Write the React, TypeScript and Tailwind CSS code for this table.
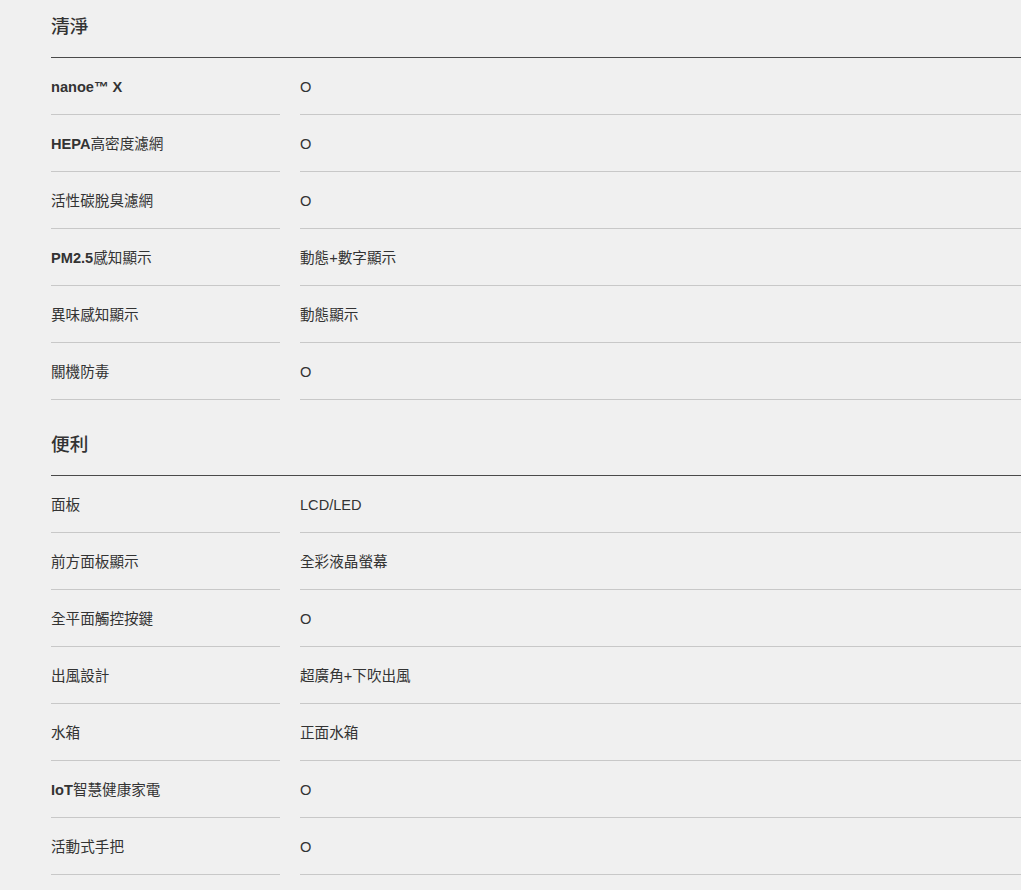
import React from 'react';

type Row = { label: React.ReactNode; value: string };

const sections: { title: string; rows: Row[] }[] = [
  {
    title: '清淨',
    rows: [
      { label: <b className="font-bold">nanoe™ X</b>, value: 'O' },
      { label: <><b className="font-bold">HEPA</b>高密度濾網</>, value: 'O' },
      { label: '活性碳脫臭濾網', value: 'O' },
      { label: <><b className="font-bold">PM2.5</b>感知顯示</>, value: '動態+數字顯示' },
      { label: '異味感知顯示', value: '動態顯示' },
      { label: '關機防毒', value: 'O' },
    ],
  },
  {
    title: '便利',
    rows: [
      { label: '面板', value: 'LCD/LED' },
      { label: '前方面板顯示', value: '全彩液晶螢幕' },
      { label: '全平面觸控按鍵', value: 'O' },
      { label: '出風設計', value: '超廣角+下吹出風' },
      { label: '水箱', value: '正面水箱' },
      { label: <><b className="font-bold">IoT</b>智慧健康家電</>, value: 'O' },
      { label: '活動式手把', value: 'O' },
    ],
  },
];

export default function App() {
  return (
    <div
      className="min-h-screen bg-[#f0f0f0] pl-[51px] text-[#333]"
      style={{ fontFamily: '"Liberation Sans", "Noto Sans CJK TC", sans-serif' }}
    >
      {sections.map((section, i) => (
        <section key={section.title} className={i > 0 ? 'mt-[18px]' : ''}>
          <h2 className="flex h-[58px] items-center border-b border-[#4a4a4a] pb-[3px] text-[18.7px] font-medium text-[#333]">
            {section.title}
          </h2>
          {section.rows.map((row, j) => (
            <div key={j} className="flex text-[14.6px]">
              <div className="flex h-[57px] w-[229px] shrink-0 items-center border-b border-[#c8c8c8] pt-[3px]">
                {row.label}
              </div>
              <div className="ml-[20px] flex h-[57px] flex-1 items-center border-b border-[#c8c8c8] pt-[3px]">
                {row.value}
              </div>
            </div>
          ))}
        </section>
      ))}
    </div>
  );
}
